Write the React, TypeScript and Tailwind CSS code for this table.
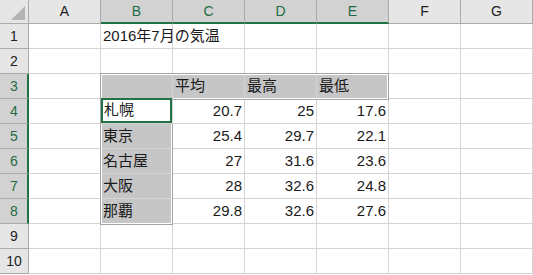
import React from "react";

const cols = ["A", "B", "C", "D", "E", "F", "G"];
const selCols = ["B", "C", "D", "E"];
const selRows = [3, 4, 5, 6, 7, 8];

type Cell = { t: string; num?: boolean; fill?: boolean; active?: boolean };

const data: Record<number, Record<string, Cell>> = {
  1: { B: { t: "2016年7月の気温" } },
  3: {
    B: { t: "", fill: true },
    C: { t: "平均", fill: true },
    D: { t: "最高", fill: true },
    E: { t: "最低", fill: true },
  },
  4: { B: { t: "札幌", active: true }, C: { t: "20.7", num: true }, D: { t: "25", num: true }, E: { t: "17.6", num: true } },
  5: { B: { t: "東京", fill: true }, C: { t: "25.4", num: true }, D: { t: "29.7", num: true }, E: { t: "22.1", num: true } },
  6: { B: { t: "名古屋", fill: true }, C: { t: "27", num: true }, D: { t: "31.6", num: true }, E: { t: "23.6", num: true } },
  7: { B: { t: "大阪", fill: true }, C: { t: "28", num: true }, D: { t: "32.6", num: true }, E: { t: "24.8", num: true } },
  8: { B: { t: "那覇", fill: true }, C: { t: "29.8", num: true }, D: { t: "32.6", num: true }, E: { t: "27.6", num: true } },
};

const font = { fontFamily: '"Liberation Sans", "Noto Sans CJK JP", sans-serif' };

export default function App() {
  const rows = Array.from({ length: 10 }, (_, i) => i + 1);
  return (
    <div className="w-[533px] h-[275px] bg-white overflow-hidden" style={font}>
      <div className="relative grid grid-cols-[29px_repeat(7,72px)] grid-rows-[24px_repeat(10,25px)]">
        {/* corner */}
        <div className="relative bg-[#e6e6e6] border-r border-b border-[#ababab]">
          <svg className="absolute right-[3px] bottom-[3px]" width="14" height="14" viewBox="0 0 14 14">
            <polygon points="14,0 14,14 0,14" fill="#b4b4b4" />
          </svg>
        </div>
        {cols.map((c) => {
          const sel = selCols.includes(c);
          return (
            <div
              key={c}
              className={
                sel
                  ? "flex items-center justify-center bg-[#d2d2d2] border-r border-[#ababab] border-b-2 border-b-[#217346] text-[14px] text-[#1e6b43] pt-[1px]"
                  : "flex items-center justify-center bg-[#e6e6e6] border-r border-[#ababab] border-b text-[14px] text-[#222]"
              }
            >
              {c}
            </div>
          );
        })}
        {rows.map((r) => {
          const rsel = selRows.includes(r);
          return (
            <React.Fragment key={r}>
              <div
                className={
                  rsel
                    ? "flex items-center justify-center bg-[#d2d2d2] border-b border-[#ababab] border-r-2 border-r-[#217346] text-[14px] text-[#1e6b43] pl-[1px]"
                    : "flex items-center justify-center bg-[#e6e6e6] border-b border-r border-[#ababab] text-[14px] text-[#222]"
                }
              >
                {r}
              </div>
              {cols.map((c) => {
                const cell = data[r]?.[c];
                if (cell?.active) {
                  return (
                    <div key={c} className="relative z-10 flex border-r border-b border-[#d4d4d4] bg-white">
                      <div className="flex-1 -mt-[1px] flex items-center border-2 border-[#217346] bg-white pl-[1px] text-[15px] text-[#1a1a1a]">
                        {cell.t}
                      </div>
                    </div>
                  );
                }
                return (
                  <div
                    key={c}
                    className={
                      "flex items-center border-r border-b border-[#d4d4d4] text-[15px] text-[#1a1a1a] whitespace-nowrap overflow-visible " +
                      (cell?.num ? "justify-end pr-[2px] " : "justify-start pl-[2px] ") +
                      (cell?.fill ? "bg-[#c6c6c6] " : "")
                    }
                  >
                    {cell?.t ?? ""}
                  </div>
                );
              })}
            </React.Fragment>
          );
        })}
        {/* selection outlines (overlay) */}
        <div className="absolute left-[100px] top-[73px] w-[289px] h-[27px] border border-[#a3a3a3] pointer-events-none">
          <div className="w-full h-full border border-white" />
        </div>
        <div className="absolute left-[100px] top-[98px] w-[73px] h-[127px] border border-[#a3a3a3] pointer-events-none">
          <div className="w-full h-full border border-white" />
        </div>
      </div>
    </div>
  );
}
